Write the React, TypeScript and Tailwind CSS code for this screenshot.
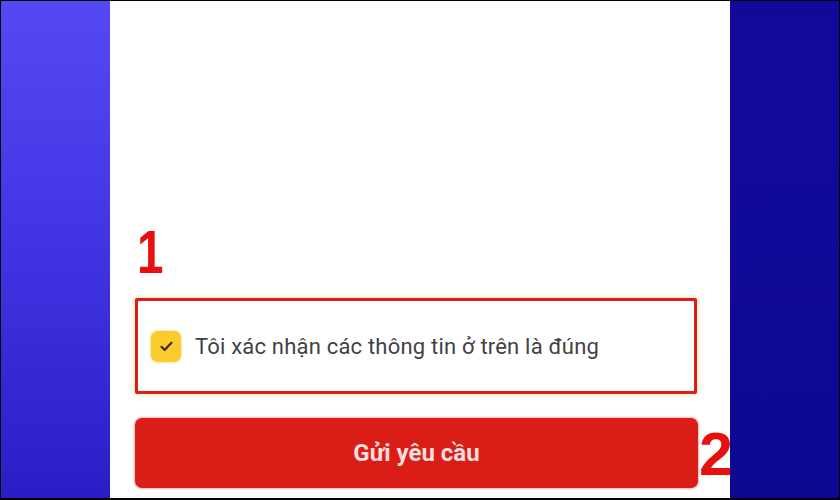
import React from 'react';

const App: React.FC = () => {
  return (
    <div className="flex h-[500px] w-[840px] overflow-hidden border-x border-t border-b-2 border-black font-['Roboto',sans-serif]">
      {/* Left backdrop */}
      <div className="w-[109px] shrink-0 bg-gradient-to-b from-[#5549f5] via-[#4133e2] to-[#2b1dc6]" />

      {/* Phone screen */}
      <div className="flex w-[620px] min-w-0 shrink-0 flex-col justify-end bg-white pb-[10px] pl-[25px]">
        <div className="pl-[2px] leading-none">
          <span className="inline-block origin-left scale-x-[0.78] text-[61px] font-bold leading-none text-[#e8100f] font-['Liberation_Sans',Arial,sans-serif]">
            1
          </span>
        </div>

        <div className="mt-[15px] mr-[33px] flex h-[96px] items-center gap-[14px] rounded-[2px] border-[3px] border-[#dc1b1b] pl-[13px] shadow-[0_0_3px_2px_#f7eec4]">
          <div className="flex h-[31px] w-[30px] shrink-0 items-center justify-center rounded-[7px] bg-[#f9cb2c] shadow-[0_0_2px_1px_#fbe7a0]">
            <svg width="15" height="15" viewBox="0 0 24 24" fill="none" stroke="#3a2a12" strokeWidth="3.4" strokeLinecap="round" strokeLinejoin="round">
              <path d="M4 12.5l5 5L20 6" />
            </svg>
          </div>
          <span className="whitespace-nowrap text-[22px] tracking-[0.2px] text-[#424242]">Tôi xác nhận các thông tin ở trên là đúng</span>
        </div>

        <div className="mt-[24px] flex items-center">
          <button className="flex h-[70px] w-[563px] shrink-0 items-center justify-center rounded-[7px] bg-[#db1d17] text-[24px] font-bold text-[#f7dede] shadow-[0_0_2px_1px_#f3b3b0]">
            Gửi yêu cầu
          </button>
          <span className="ml-[1px] mt-[2px] whitespace-nowrap text-[61px] font-bold leading-none text-[#e8100f] font-['Liberation_Sans',Arial,sans-serif]">
            2
          </span>
        </div>
      </div>

      {/* Right backdrop */}
      <div className="w-[110px] shrink-0 bg-gradient-to-b from-[#12099c] via-[#100a98] to-[#0c0890]" />
    </div>
  );
};

export default App;
